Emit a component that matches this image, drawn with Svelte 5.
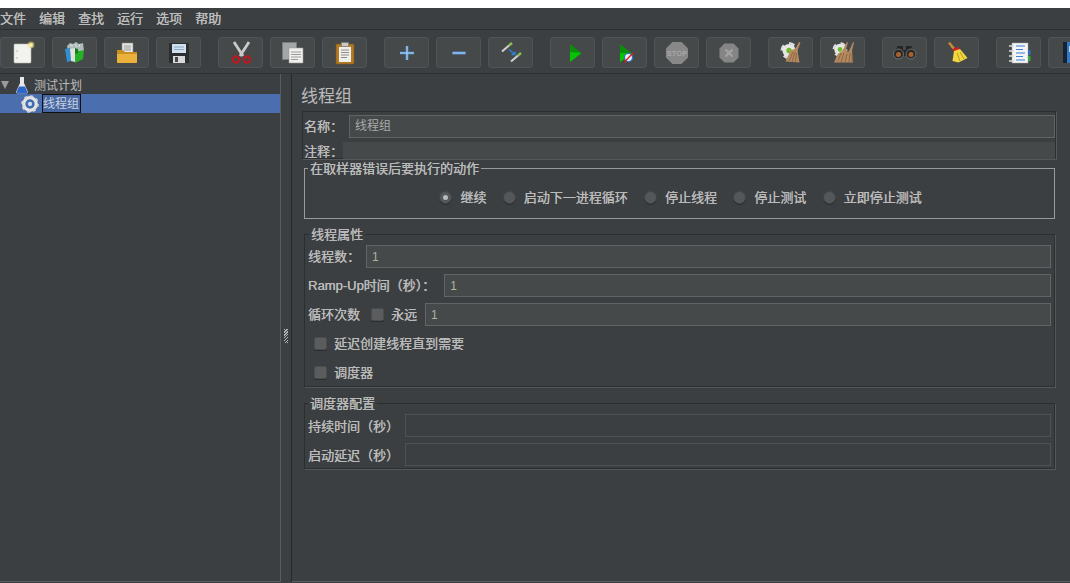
<script>
  const menus = ['文件', '编辑', '查找', '运行', '选项', '帮助'];
  const groups = [
    ['new', 'templates', 'open', 'save'],
    ['cut', 'copy', 'paste'],
    ['plus', 'minus', 'toggle'],
    ['start', 'startNoPause', 'stop', 'shutdown'],
    ['clear', 'clearAll'],
    ['search', 'broom'],
    ['log', 'help']
  ];
  const radios = [
    { label: '继续', on: true },
    { label: '启动下一进程循环' },
    { label: '停止线程' },
    { label: '停止测试' },
    { label: '立即停止测试' }
  ];
</script>

{#snippet cog(cx, cy, r)}
  <circle cx={cx} cy={cy} r={r * 0.92} fill="none" stroke="#dcdcdc" stroke-width={r * 0.3} stroke-dasharray={r * 0.72 + ' ' + r * 0.72} />
  <circle cx={cx} cy={cy} r={r * 0.82} fill="#e6e6e6" />
  <circle cx={cx} cy={cy} r={r * 0.34} fill="#6fbb2e" />
{/snippet}

{#snippet icon(name)}
  <svg viewBox="0 0 24 24" width="24" height="24" aria-hidden="true">
    {#if name === 'new'}
      <rect x="3" y="3" width="17" height="19" rx="1" fill="#f2f2ee" stroke="#b9b9b4" stroke-width=".6" />
      <circle cx="6" cy="10" r=".7" fill="#a5a5a5" /><circle cx="6" cy="17" r=".7" fill="#a5a5a5" />
      <circle cx="20" cy="4" r="3.400" fill="#f0dc7c" opacity=".55" />
      <circle cx="20" cy="4" r="2" fill="#fbeea0" />
    {:else if name === 'templates'}
      <path d="M4 5l3-3 3 1 3-2 3 2 4-1 1 8H5z" fill="#aeb9ba" />
      <path d="M7 4l3 1M12 3l2 3M17 3l-1 3" stroke="#dfe5e5" fill="none" />
      <path d="M2 8l5-1 1 13-4 1z" fill="#2f8fd0" />
      <path d="M7 8l5-1v14l-4-1z" fill="#dfe3dd" />
      <path d="M12 11l9-2-1 9-8 4z" fill="#26b026" />
      <path d="M12 7l3 1v4l-3 1z" fill="#157c18" />
    {:else if name === 'open'}
      <rect x="7" y="2" width="11" height="11" fill="#e6e6e2" stroke="#8b8b88" stroke-width=".6" />
      <path d="M9 5h7M9 7h7M9 9h7" stroke="#9a9a9a" />
      <path d="M2 9h6l2 2h12v11H2z" fill="#c98f22" />
      <path d="M2 13h20v8l-1 1H3l-1-1z" fill="#eab23a" />
    {:else if name === 'save'}
      <path d="M2 2h19l1 1v19H2z" fill="#2b2d30" />
      <rect x="5" y="3" width="14" height="9" fill="#cfe0ee" />
      <path d="M7 6h10M7 8.500h10" stroke="#8aa6c0" />
      <rect x="6" y="15" width="12" height="7" fill="#d8d8d8" />
      <rect x="8" y="16" width="3" height="5" fill="#45474a" />
    {:else if name === 'cut'}
      <path d="M5 1l9 14M20 1l-9 14" stroke="#c9c9c9" stroke-width="2.800" fill="none" />
      <circle cx="7" cy="18.500" r="3.200" fill="none" stroke="#c4161c" stroke-width="2" />
      <circle cx="18" cy="18.500" r="3.200" fill="none" stroke="#c4161c" stroke-width="2" />
    {:else if name === 'copy'}
      <rect x="1.500" y="1.500" width="14" height="17" fill="#a4a7a8" stroke="#7c7f80" stroke-width=".6" />
      <path d="M8 7h14v15H8z" fill="#efefec" stroke="#9a9a98" stroke-width=".6" />
      <path d="M10 11h10M10 13.500h10M10 16h10M10 18.500h7" stroke="#9c9c9c" />
    {:else if name === 'paste'}
      <rect x="3" y="3" width="18" height="20" rx="1" fill="#b57a26" stroke="#7e5518" stroke-width=".6" />
      <path d="M6 6h12v15H6z" fill="#efefec" />
      <rect x="8.500" y="1.500" width="7" height="4" fill="#c9c9c9" stroke="#777" stroke-width=".6" />
      <path d="M8 9h8M8 11.500h8M8 14h8M8 16.500h6" stroke="#8d8d8d" />
    {:else if name === 'plus'}
      <path d="M12 5v14M5 12h14" stroke="#5a9bde" stroke-width="2.600" />
      <path d="M12 5v14M5 12h14" stroke="#b4d4f5" stroke-width=".9" />
    {:else if name === 'minus'}
      <path d="M5.500 12h13" stroke="#5a9bde" stroke-width="2.800" />
      <path d="M5.500 12h13" stroke="#b4d4f5" stroke-width=".9" />
    {:else if name === 'toggle'}
      <path d="M3 10.500l7-6" stroke="#cfcfcf" stroke-width="2.200" />
      <path d="M10 4.500l3-2.500" stroke="#8cc152" stroke-width="2.400" />
      <path d="M12 20.500l7-6" stroke="#cfcfcf" stroke-width="2.200" />
      <path d="M19 14.500l3-2.500" stroke="#8cc152" stroke-width="2.400" />
      <path d="M10 8.500l6 5M16 10.500v3h-3.500" stroke="#2f82d8" stroke-width="1.400" fill="none" />
    {:else if name === 'start'}
      <path d="M9 3l11.500 9L9 21z" fill="#0a8f0a" />
      <path d="M9 11l11.500 1L9 21z" fill="#04c404" />
    {:else if name === 'startNoPause'}
      <path d="M7 3l12 9.500L7 21z" fill="#0a8f0a" />
      <path d="M7 12l12 .5L7 21z" fill="#04c404" />
      <circle cx="15.500" cy="16.500" r="4" fill="#e6effa" stroke="#2d6fc4" stroke-width="1.200" />
      <path d="M11 21.500l9-9.500" stroke="#e01b1b" stroke-width="1.300" />
    {:else if name === 'stop'}
      <path d="M7.500 1h9L23 7.500v9L16.500 23h-9L1 16.500v-9z" fill="#888" />
      <text x="12" y="14.500" class="stoptxt" text-anchor="middle">STOP</text>
    {:else if name === 'shutdown'}
      <path d="M7.500 2.500h9l5 5v9l-5 5h-9l-5-5v-9z" fill="#858585" />
      <path d="M8.500 8.500l7 7M15.500 8.500l-7 7" stroke="#a2a2a2" stroke-width="2.400" />
    {:else if name === 'clear'}
      {@render cog(10, 9.500, 8)}
      <path d="M20 1l1.500.5-3 8 2 12-14-1 5-11 5-2z" fill="#b58a5f" />
      <path d="M10 20l4-9M13 21l3-10M16.500 21l1-9" stroke="#80603f" fill="none" stroke-width=".8" />
    {:else if name === 'clearAll'}
      {@render cog(9, 8.500, 7)}
      <path d="M16 1l1 .5-2 7 2 3 2-3.500 3-7 1 .5-2 8 1 12-19 0 4-9 4-2z" fill="#b58a5f" />
      <path d="M7 20l3-8M10 21l3-9M14 21l2-8M18 21l1-9M21 21l0-8" stroke="#80603f" fill="none" stroke-width=".8" />
    {:else if name === 'search'}
      <path d="M2 9l3-4h5v4h3V5h5l3 4 3 6H-1z" fill="#242424" />
      <circle cx="5.500" cy="13" r="5" fill="#2a2a2a" stroke="#777" stroke-width=".9" />
      <circle cx="18" cy="13" r="5" fill="#2a2a2a" stroke="#777" stroke-width=".9" />
      <circle cx="5.500" cy="13.500" r="2.500" fill="#a8602d" />
      <circle cx="18" cy="13.500" r="2.500" fill="#a8602d" />
    {:else if name === 'broom'}
      <path d="M3 2l2-1 5 6-2 2z" fill="#c78b37" />
      <path d="M7 8l6-2 2 2-6 3z" fill="#d11f25" />
      <path d="M9 10l6-2 7.500 9-9 4.500-6-1.500z" fill="#f2d740" />
      <path d="M12 12l3 8M15 11l4 7" stroke="#b89c1c" fill="none" />
    {:else if name === 'log'}
      <rect x="5" y="2" width="16" height="20" fill="#f5f5f5" stroke="#a9a9a9" stroke-width=".5" />
      <path d="M9 5h9M9 8.500h7M9 12h9M9 15.500h7M9 19h9" stroke="#3a7fd8" stroke-width="1.200" />
      <path d="M2 5h5M2 10h5M2 15h5M2 20h5" stroke="#dcdcdc" stroke-width="1.600" />
      <rect x="21" y="9" width="2.500" height="5" fill="#2f6fc0" />
      <rect x="21" y="15" width="2.500" height="5" fill="#3aa845" />
    {:else if name === 'help'}
      <rect x="4" y="1" width="4" height="21" fill="#16222e" />
      <rect x="8" y="1" width="15" height="21" fill="#2f79c9" />
      <rect x="10" y="5" width="10" height="6" fill="#bcd7f2" />
    {/if}
  </svg>
{/snippet}

<div class="app">
  <div class="topstrip"></div>
  <nav class="menubar">
    {#each menus as m}<span class="menu">{m}</span>{/each}
  </nav>
  <div class="toolbar">
    {#each groups as g}
      <div class="group">
        {#each g as b}
          <button class="tool" type="button">{@render icon(b)}</button>
        {/each}
      </div>
    {/each}
  </div>

  <div class="main">
    <aside class="tree">
      <div class="node">
        <span class="caret"></span>
        <svg class="flask" viewBox="0 0 12 18" width="12" height="18" aria-hidden="true">
          <path d="M4 1h4v6l4 9-1 1.500H1l-1-1.500 4-9z" fill="#e8e8e8" />
          <path d="M3 10.500h6l2.500 5.500-1 1.500h-9l-1-1.500z" fill="#2c67c9" />
        </svg>
        <span class="plan">测试计划</span>
      </div>
      <div class="node selected">
        <svg class="gear" viewBox="0 0 20 20" width="18" height="18" aria-hidden="true">
          <circle cx="10" cy="10" r="7" fill="none" stroke="#e4e4e4" stroke-width="3.600" />
          <circle cx="10" cy="10" r="8.500" fill="none" stroke="#d8d8d8" stroke-width="2.600" stroke-dasharray="3 3.670" />
          <circle cx="10" cy="10" r="4.400" fill="#3e6bb0" />
          <circle cx="10" cy="10" r="2.400" fill="#c9ddf4" />
        </svg>
        <span class="focus">线程组</span>
      </div>
    </aside>

    <div class="splitter"><span class="grip"></span></div>

    <section class="panel">
      <h1>线程组</h1>
      <div class="namebox">
        <div class="namerow">
          <span class="lbl">名称：</span>
          <div class="field edged small">线程组</div>
        </div>
        <div class="commentrow">
          <span class="lbl">注释：</span>
          <div class="field comment"></div>
        </div>
      </div>

      <fieldset class="bright">
        <legend>在取样器错误后要执行的动作</legend>
        <div class="radios">
          {#each radios as r}
            <span class="radio-item">
              <span class="radio" class:on={r.on}></span>
              <span>{r.label}</span>
            </span>
          {/each}
        </div>
      </fieldset>

      <fieldset class="props">
        <legend>线程属性</legend>
        <div class="row"><span class="lbl">线程数：</span><div class="field edged val">1</div></div>
        <div class="row"><span class="lbl latin">Ramp-Up时间（秒）：</span><div class="field edged val">1</div></div>
        <div class="row loop">
          <span class="lbl">循环次数</span>
          <span class="check"></span>
          <span class="lbl forever">永远</span>
          <div class="field edged val">1</div>
        </div>
        <div class="checkrow first"><span class="check"></span><span class="lbl">延迟创建线程直到需要</span></div>
        <div class="checkrow"><span class="check"></span><span class="lbl">调度器</span></div>
      </fieldset>

      <fieldset class="sched">
        <legend>调度器配置</legend>
        <div class="row"><span class="lbl">持续时间（秒）</span><div class="field edged faint"></div></div>
        <div class="row"><span class="lbl">启动延迟（秒）</span><div class="field edged faint"></div></div>
      </fieldset>
    </section>
  </div>
</div>

<style>
  :global(body) {
    margin: 0;
    background: #fff;
  }
  .app {
    width: 1070px;
    height: 583px;
    overflow: hidden;
    display: flex;
    flex-direction: column;
    background: #3c3f41;
    color: #bbb;
    font: 13px/1 "Liberation Sans", "Noto Sans CJK SC", sans-serif;
  }
  .topstrip {
    height: 8px;
    flex: none;
    background: #fff;
  }
  .menubar {
    height: 22px;
    box-sizing: border-box;
    flex: none;
    display: flex;
    align-items: center;
    gap: 13px;
    color: #bdbdbd;
    border-bottom: 1px solid #2c2e30;
    box-shadow: 0 1px 0 #55585a;
    text-shadow: 0.3px 0 0 #bdbdbd;
  }
  .toolbar {
    height: 43px;
    flex: none;
    box-sizing: border-box;
    padding: 7px 0 0;
    display: flex;
    gap: 17px;
    background: #3c3f41;
  }
  .group {
    display: flex;
    gap: 7px;
    flex: none;
  }
  .tool {
    width: 45px;
    height: 31px;
    padding: 0;
    flex: none;
    display: flex;
    align-items: center;
    justify-content: center;
    background: #45494a;
    border: 1px solid #505355;
    border-radius: 3px;
  }
  .tool svg {
    display: block;
  }
  .stoptxt {
    font: bold 7.500px "Liberation Sans", sans-serif;
    fill: #a7a7a7;
  }
  .main {
    flex: 1;
    display: flex;
    min-height: 0;
    border-top: 1px solid #2f3133;
    margin-bottom: 1px;
  }
  .tree {
    width: 281px;
    flex: none;
    box-sizing: border-box;
    padding-top: 1px;
    border-right: 1px solid #5a5d5f;
    border-bottom: 1px solid #5a5d5f;
    font-size: 12px;
  }
  .node {
    height: 19px;
    display: flex;
    align-items: center;
  }
  .caret {
    width: 0;
    height: 0;
    margin: 0 7px 0 1px;
    border: 4px solid transparent;
    border-top: 8px solid #9a9a9a;
    border-bottom: 0;
  }
  .flask {
    margin-right: 6px;
  }
  .plan {
    padding-top: 2px;
  }
  .selected {
    background: #4b6eaf;
    padding-left: 21px;
  }
  .gear {
    margin-right: 3px;
    flex: none;
  }
  .focus {
    box-sizing: border-box;
    height: 19px;
    display: flex;
    align-items: center;
    border: 1px solid #101010;
    background: #47669f;
    padding: 0 1px 0 0;
    color: #c8d2e2;
  }
  .splitter {
    width: 11px;
    flex: none;
    display: flex;
    align-items: center;
    justify-content: center;
    border-right: 1px solid #26282a;
    box-sizing: border-box;
    padding-top: 16px;
  }
  .grip {
    width: 4px;
    height: 14px;
    background: repeating-linear-gradient(135deg, #b8b8b8 0 1px, #3c3f41 1px 2px);
  }
  .panel {
    flex: 1;
    min-width: 0;
    box-sizing: border-box;
    padding: 13px 15px 0 10px;
    border-bottom: 1px solid #5a5d5f;
  }
  h1 {
    margin: 0 0 4px -1px;
    font-size: 17px;
    line-height: 20px;
    font-weight: 400;
    color: #bbb;
  }
  .lbl {
    flex: none;
    color: #bbb;
    white-space: nowrap;
    text-shadow: 0.3px 0 0 #bbb;
  }
  .namebox {
    height: 48px;
    box-sizing: border-box;
    border: 1px solid #2c2e30;
    box-shadow: 1px 1px 0 #55585a;
    padding: 2px 0 0 1px;
    margin-right: -1px;
  }
  .namerow {
    display: flex;
    align-items: center;
    height: 24px;
  }
  .namerow .field {
    margin-left: 6px;
  }
  .commentrow {
    display: flex;
    align-items: center;
    height: 17px;
    margin-top: 4px;
  }
  .commentrow .lbl {
    padding-top: 2px;
  }
  .field {
    flex: 1;
    min-width: 0;
    box-sizing: border-box;
    height: 23px;
    display: flex;
    align-items: center;
    background: #45494a;
    font-size: 12px;
  }
  .edged {
    border: 1px solid #646464;
    padding-left: 5px;
  }
  .small {
    color: #aaa;
  }
  .comment {
    height: 17px;
    background: #45494a;
  }
  .val {
    color: #a9b7a0;
    font-size: 12px;
  }
  .faint {
    background: transparent;
    border-color: #4f5254;
  }
  fieldset {
    margin: 0 0 0 2px;
    padding: 0 3px 0 3px;
    min-width: 0;
    border: 1px solid #2c2e30;
    box-shadow: 1px 1px 0 #55585a;
  }
  legend {
    margin-left: 0;
    padding: 0 2px;
    font-size: 13px;
    line-height: 15px;
    color: #bbb;
    text-shadow: 0.3px 0 0 #bbb;
  }
  .props legend {
    margin-left: 1px;
  }
  .bright {
    margin-top: 2px;
    height: 58px;
    box-sizing: border-box;
    border-color: #9a9a9a;
    box-shadow: none;
  }
  .radios {
    display: flex;
    justify-content: center;
    gap: 16.300px;
    padding: 15px 0 0 2px;
  }
  .radio-item {
    display: flex;
    align-items: center;
    gap: 8px;
    text-shadow: 0.3px 0 0 #bbb;
  }
  .radio {
    width: 13px;
    height: 13px;
    box-sizing: border-box;
    border-radius: 50%;
    background: #53575a;
    border: 1px solid #45484a;
    box-shadow: 0 1px 0 #2a2c2e;
    display: flex;
    align-items: center;
    justify-content: center;
  }
  .radio.on::after {
    content: "";
    width: 5px;
    height: 5px;
    border-radius: 50%;
    background: #bbb;
  }
  .props {
    margin-top: 8px;
    height: 160px;
    box-sizing: border-box;
  }
  .sched {
    margin-top: 9px;
    height: 73px;
    box-sizing: border-box;
  }
  .sched .lbl {
    padding-top: 1px;
  }
  .row {
    display: flex;
    align-items: center;
    height: 23px;
    margin-bottom: 6px;
    gap: 6px;
  }
  .loop {
    gap: 11px;
  }
  .latin {
    margin-right: 3px;
  }
  .props .row:first-of-type,
  .sched .row:first-of-type {
    margin-top: 3px;
  }
  .check {
    width: 13px;
    height: 13px;
    flex: none;
    box-sizing: border-box;
    background: #5a5c5e;
    border: 1px solid #4a4c4e;
    border-radius: 2px;
    box-shadow: 0 1px 0 #2a2c2e;
  }
  .forever {
    margin-left: -4px;
    margin-right: -3px;
  }
  .checkrow {
    display: flex;
    align-items: center;
    gap: 7px;
    height: 29px;
    padding-left: 6px;
  }
  .first {
    margin-top: -3px;
  }
</style>
